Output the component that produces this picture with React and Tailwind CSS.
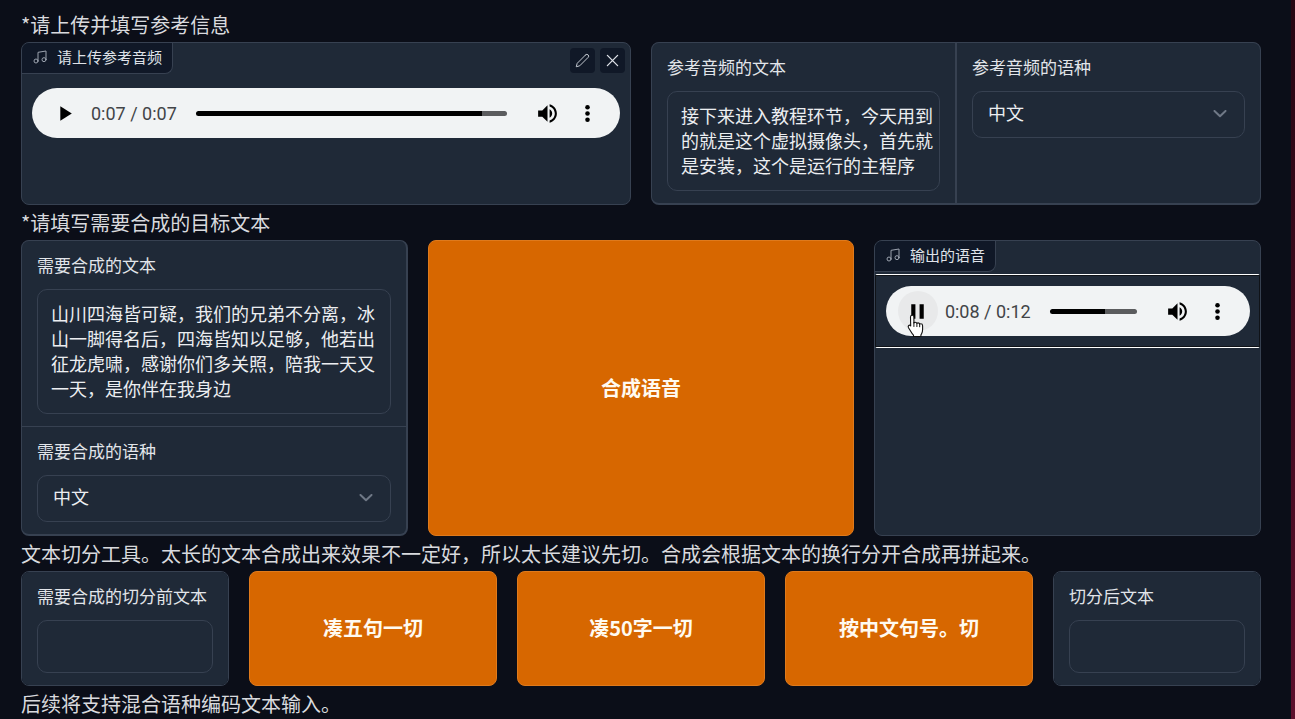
import React, { useId } from "react";
import { Music } from "lucide-react";

function Heading({ children }) {
  return (
    <p className="flex h-[35px] items-center whitespace-nowrap pb-px text-[20px] leading-[25px] text-[#d9dade]">
      {children}
    </p>
  );
}

function TextField({ label, value = "", rows = 1 }) {
  const id = useId();
  return (
    <div className="min-w-0 bg-[#1f2937] px-[15px] pt-[11px] pb-3">
      <label htmlFor={id} className="mb-3 block whitespace-nowrap text-[17px] leading-[25px] text-[#e2e5ea]">
        {label}
      </label>
      <textarea
        id={id}
        rows={rows}
        defaultValue={value}
        className="block min-h-[53px] w-full resize-none overflow-hidden rounded-[10px] border border-[#374151] bg-[#1f2937] pt-[11px] pr-1 pb-3 pl-[13px] text-[18px] leading-[25px] text-[#eceef1] outline-none"
      />
    </div>
  );
}

function SelectField({ label }) {
  const id = useId();
  return (
    <div className="min-w-0 bg-[#1f2937] px-[15px] pt-[11px] pb-3">
      <label htmlFor={id} className="mb-3 block whitespace-nowrap text-[17px] leading-[25px] text-[#e2e5ea]">
        {label}
      </label>
      <div className="relative">
        <select
          id={id}
          defaultValue="中文"
          className="block h-[47px] w-full appearance-none rounded-[10px] border border-[#374151] bg-[#1f2937] px-[15px] pb-1 text-[18px] leading-[25px] text-[#eceef1] outline-none"
        >
          <option>中文</option>
          <option>英文</option>
          <option>日文</option>
        </select>
        <svg
          viewBox="0 0 14 8"
          className="pointer-events-none absolute top-[19px] right-[18px] h-2 w-[14px]"
          fill="none"
          stroke="#6f7886"
          strokeWidth="2"
          strokeLinecap="round"
          strokeLinejoin="round"
        >
          <path d="M1.500 1 7 6.200 12.500 1" />
        </svg>
      </div>
    </div>
  );
}

function Tag({ children }) {
  return (
    <div className="flex h-[31px] items-center gap-[9px] rounded-tl-[7px] rounded-br-[8px] border-r border-b border-[#374151] bg-[#101827] pr-[10px] pb-[2px] pl-[10px] text-[15px] leading-[20px] text-[#dfe2e8]">
      <Music size={16} strokeWidth={1.5} color="#9ca3af" />
      <span className="whitespace-nowrap">{children}</span>
    </div>
  );
}

function Pointer() {
  return (
    <svg viewBox="0 0 18 24" className="pointer-events-none absolute top-[23px] left-[9px] z-10 h-6 w-[18px]">
      <path
        d="M5.2 1.2c1 0 1.700.7 1.700 1.700v6c.3-.5.8-.7 1.400-.7.8 0 1.400.5 1.600 1.200.3-.3.7-.5 1.200-.5.8 0 1.400.5 1.600 1.200.3-.2.6-.3 1-.3 1.100 0 1.900.8 1.900 1.900v3.800c0 1.500-.3 2.700-.9 3.900l-.8 1.600v1.500H6.500v-1.400c-1.200-1.100-2-2.300-2.800-3.800L1.500 13.700c-.5-.9-.4-1.700.2-2.200.7-.5 1.500-.3 2 .4l-.2-9c0-1 .7-1.700 1.700-1.700z"
        fill="#fff"
        stroke="#111"
        strokeWidth="1.1"
        strokeLinejoin="round"
      />
      <path d="M6.900 8.500v4M9.900 9.600v3M12.700 10.400v2.400" stroke="#111" strokeWidth="1" strokeLinecap="round" />
    </svg>
  );
}

function Player({ name, current, total, progress, playing = false }) {
  const track = {
    background: `linear-gradient(to right, #000 ${progress}%, #5b5c5e ${progress}%)`,
  };
  return (
    <div role="group" aria-label={name} className="flex h-[50px] items-center rounded-full bg-[#f1f3f4] pr-[13px] pl-3">
      <div className="relative shrink-0">
        <button
          type="button"
          aria-label={playing ? "暂停" : "播放"}
          className={
            playing
              ? "flex size-10 items-center justify-center rounded-full bg-[#e8e9ea]"
              : "flex size-10 items-center justify-center rounded-full"
          }
        >
          <svg viewBox="0 0 24 24" className="size-[25px]" fill="#000">
            {playing ? <path d="M6 19h4V5H6v14zm8-14v14h4V5h-4z" /> : <path d="M8 5v14l11-7z" />}
          </svg>
        </button>
        {playing && <Pointer />}
      </div>
      <span className="ml-[7px] shrink-0 whitespace-nowrap font-[Roboto,sans-serif] text-[18px] leading-[25px] text-[#424447]">
        {current} / {total}
      </span>
      <input
        type="range"
        aria-label="播放进度"
        min="0"
        max="100"
        defaultValue={progress}
        style={track}
        className="mr-5 ml-[19px] h-[5px] w-0 min-w-0 flex-1 appearance-none rounded-full outline-none [&::-webkit-slider-thumb]:size-0 [&::-webkit-slider-thumb]:appearance-none"
      />
      <button type="button" aria-label="音量" className="flex size-10 shrink-0 items-center justify-center">
        <svg viewBox="0 0 24 24" className="size-[25px]" fill="#000">
          <path d="M3 9v6h4l5 5V4L7 9H3zm13.500 3c0-1.770-1.020-3.290-2.500-4.030v8.050c1.480-.73 2.500-2.250 2.500-4.020zM14 3.230v2.060c2.890.86 5 3.540 5 6.710s-2.110 5.850-5 6.710v2.060c4.010-.91 7-4.490 7-8.770s-2.990-7.860-7-8.770z" />
        </svg>
      </button>
      <button type="button" aria-label="更多选项" className="flex size-10 shrink-0 items-center justify-center">
        <svg viewBox="0 0 24 24" className="size-[25px]" fill="#000">
          <circle cx="12" cy="6" r="2.200" />
          <circle cx="12" cy="12" r="2.200" />
          <circle cx="12" cy="18" r="2.200" />
        </svg>
      </button>
    </div>
  );
}

function ActionButton({ children }) {
  return (
    <button
      type="button"
      className="rounded-[8px] border border-[#df7a1c] bg-[#d76700] pb-[2px] text-[20px] leading-[25px] font-bold text-[#fffaf0]"
    >
      {children}
    </button>
  );
}

export default function App() {
  return (
    <div className="flex min-h-screen bg-[#0b0e18] font-['Noto_Sans_CJK_SC',sans-serif]">
      <main className="min-w-0 flex-1 pt-[7px] pr-[30px] pl-[21px]">
        <Heading>*请上传并填写参考信息</Heading>
        <div className="grid grid-cols-2 gap-5">
          <section className="rounded-[8px] border border-[#374151] bg-[#1f2937]">
            <div className="flex justify-between">
              <Tag>请上传参考音频</Tag>
              <div className="flex gap-[5px] pt-[5px] pr-[5px]">
                <button
                  type="button"
                  aria-label="编辑"
                  className="flex size-[25px] items-center justify-center rounded-[4px] bg-[#101827]"
                >
                  <svg
                    viewBox="0 0 24 24"
                    className="size-[15px]"
                    fill="none"
                    stroke="#c3c8d0"
                    strokeWidth="1.600"
                    strokeLinecap="round"
                    strokeLinejoin="round"
                  >
                    <path d="M17 3a2.828 2.828 0 1 1 4 4L7.500 20.500 2 22l1.500-5.500L17 3z" />
                  </svg>
                </button>
                <button
                  type="button"
                  aria-label="清除"
                  className="flex size-[25px] items-center justify-center rounded-[4px] bg-[#101827]"
                >
                  <svg
                    viewBox="0 0 14 14"
                    className="size-[13px]"
                    fill="none"
                    stroke="#dfe2e8"
                    strokeWidth="1.400"
                    strokeLinecap="round"
                  >
                    <path d="M1.500 1.500l11 11M12.500 1.500l-11 11" />
                  </svg>
                </button>
              </div>
            </div>
            <div className="px-[10px] pt-[14px]">
              <Player name="参考音频" current="0:07" total="0:07" progress={92} />
            </div>
          </section>
          <section className="grid grid-cols-2 gap-[2px] overflow-hidden rounded-[8px] border border-b-2 border-[#374151] bg-[#374151]">
            <TextField
              label="参考音频的文本"
              rows={3}
              value="接下来进入教程环节，今天用到的就是这个虚拟摄像头，首先就是安装，这个是运行的主程序"
            />
            <SelectField label="参考音频的语种" />
          </section>
        </div>

        <Heading>*请填写需要合成的目标文本</Heading>
        <div className="grid grid-cols-[10fr_11fr_10fr] gap-5">
          <section className="flex flex-col gap-px overflow-hidden rounded-[8px] border border-r-2 border-b-2 border-[#374151] bg-[#374151]">
            <TextField
              label="需要合成的文本"
              rows={4}
              value="山川四海皆可疑，我们的兄弟不分离，冰山一脚得名后，四海皆知以足够，他若出征龙虎啸，感谢你们多关照，陪我一天又一天，是你伴在我身边"
            />
            <SelectField label="需要合成的语种" />
          </section>
          <ActionButton>合成语音</ActionButton>
          <section className="rounded-[8px] border border-[#374151] bg-[#1f2937]">
            <div className="flex">
              <Tag>输出的语音</Tag>
            </div>
            <div className="mt-[2px] rounded-[2px] border-x border-y border-x-[#101318] border-y-white">
              <div className="border-y border-[#101318] py-[10px] pr-[9px] pl-[10px]">
                <Player name="输出的语音" current="0:08" total="0:12" progress={63} playing />
              </div>
            </div>
          </section>
        </div>

        <Heading>文本切分工具。太长的文本合成出来效果不一定好，所以太长建议先切。合成会根据文本的换行分开合成再拼起来。</Heading>
        <div className="grid grid-cols-[26fr_31fr_31fr_31fr_26fr] gap-5">
          <section className="overflow-hidden rounded-[8px] border border-[#374151] bg-[#1f2937]">
            <TextField label="需要合成的切分前文本" />
          </section>
          <ActionButton>凑五句一切</ActionButton>
          <ActionButton>凑50字一切</ActionButton>
          <ActionButton>按中文句号。切</ActionButton>
          <section className="overflow-hidden rounded-[8px] border border-[#374151] bg-[#1f2937]">
            <TextField label="切分后文本" />
          </section>
        </div>
        <div className="-mb-[2px]">
          <Heading>后续将支持混合语种编码文本输入。</Heading>
        </div>
      </main>
      <div className="w-1 shrink-0 bg-linear-to-b from-[#260612] to-[#5c0f2c]" />
    </div>
  );
}
